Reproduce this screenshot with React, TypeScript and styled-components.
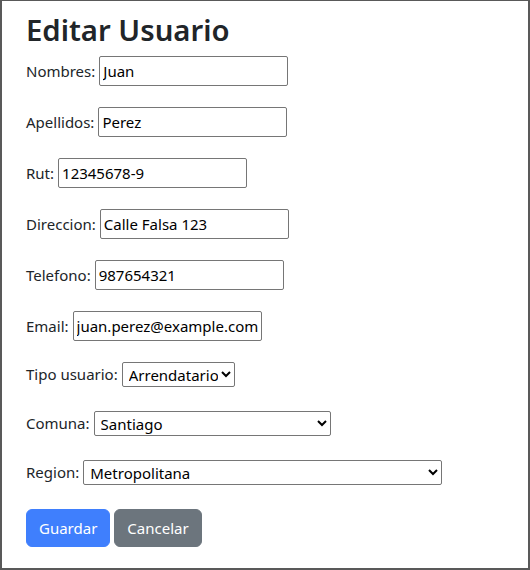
import React from "react";
import styled, { createGlobalStyle } from "styled-components";

const Global = createGlobalStyle`
  html, body { margin: 0; padding: 0; background: #fff; }
  body {
    font-family: "Noto Sans", "Open Sans", sans-serif;
    font-size: 15px;
    line-height: 1.5;
    color: #212529;
  }
  * { box-sizing: border-box; }
`;

const Frame = styled.div`
  width: 530px;
  height: 570px;
  border-style: solid;
  border-color: #595959;
  border-width: 1px 2px 2px 2px;
  padding: 11px 24px 0 24px;
`;

const Title = styled.h1`
  margin: 0 0 8px 0;
  font-size: 29.3px;
  line-height: 36px;
  font-weight: 600;
  color: #212529;
`;

const Form = styled.form`
  display: flex;
  flex-direction: column;
`;

const Field = styled.div<{ $gap: number }>`
  display: flex;
  align-items: center;
  margin-bottom: ${(p) => p.$gap}px;
`;

const Label = styled.label`
  display: flex;
  align-items: center;
  gap: 4px;
  white-space: nowrap;
`;

const TextInput = styled.input`
  width: 189px;
  height: 30px;
  margin: 0;
  padding: 1px 3px;
  border: 1px solid #767676;
  border-radius: 2px;
  font: inherit;
  color: #000;
  background: #fff;
`;

const Select = styled.select<{ $w: number }>`
  width: ${(p) => p.$w}px;
  height: 25px;
  margin: 0;
  padding: 0 0 0 2px;
  border: 1px solid #767676;
  border-radius: 2px;
  font: inherit;
  line-height: normal;
  color: #000;
  background: #fff;
`;

const Actions = styled.div`
  display: flex;
  gap: 4px;
`;

const Button = styled.button<{ $variant: "primary" | "secondary" }>`
  height: 38px;
  padding: 6px 12px;
  border: 1px solid ${(p) => (p.$variant === "primary" ? "#3f7ffd" : "#6c757d")};
  background: ${(p) => (p.$variant === "primary" ? "#3f7ffd" : "#6c757d")};
  color: #fff;
  border-radius: 6px;
  font: inherit;
  font-size: 15px;
  line-height: 24px;
  cursor: pointer;
`;

export default function App() {
  return (
    <>
      <Global />
      <Frame>
        <Title>Editar Usuario</Title>
        <Form onSubmit={(e) => e.preventDefault()}>
          <Field $gap={21}>
            <Label>Nombres:<TextInput defaultValue="Juan" /></Label>
          </Field>
          <Field $gap={21}>
            <Label>Apellidos:<TextInput defaultValue="Perez" /></Label>
          </Field>
          <Field $gap={21}>
            <Label>Rut:<TextInput defaultValue="12345678-9" /></Label>
          </Field>
          <Field $gap={21}>
            <Label>Direccion:<TextInput defaultValue="Calle Falsa 123" /></Label>
          </Field>
          <Field $gap={21}>
            <Label>Telefono:<TextInput defaultValue="987654321" /></Label>
          </Field>
          <Field $gap={21}>
            <Label>Email:<TextInput defaultValue="juan.perez@example.com" /></Label>
          </Field>
          <Field $gap={24}>
            <Label>
              Tipo usuario:
              <Select $w={113} defaultValue="Arrendatario">
                <option>Arrendatario</option>
                <option>Propietario</option>
              </Select>
            </Label>
          </Field>
          <Field $gap={24}>
            <Label>
              Comuna:
              <Select $w={237} defaultValue="Santiago">
                <option>Santiago</option>
              </Select>
            </Label>
          </Field>
          <Field $gap={24}>
            <Label>
              Region:
              <Select $w={359} defaultValue="Metropolitana">
                <option>Metropolitana</option>
              </Select>
            </Label>
          </Field>
          <Actions>
            <Button type="submit" $variant="primary">Guardar</Button>
            <Button type="button" $variant="secondary">Cancelar</Button>
          </Actions>
        </Form>
      </Frame>
    </>
  );
}
